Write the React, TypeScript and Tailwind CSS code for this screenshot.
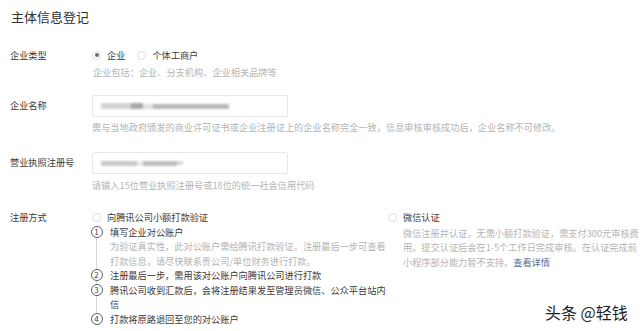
const dark = "text-[#3a3a3a]";
const gray = "text-[#b4b4b4]";

function Radio({ checked }: { checked?: boolean }) {
  return (
    <span className="w-[9px] h-[9px] rounded-full border border-[#dcdcdc] bg-white flex items-center justify-center shrink-0">
      {checked && <span className="w-[4px] h-[4px] rounded-full bg-[#6b6b6b]" />}
    </span>
  );
}

function StepNo({ n }: { n: number }) {
  return (
    <span className="w-[12px] h-[12px] rounded-full border border-[#5e5e5e] bg-white flex items-center justify-center text-[8px] leading-none text-[#444] shrink-0">
      {n}
    </span>
  );
}

function Step({ n, lines, desc }: { n: number; lines: string[]; desc?: string[] }) {
  return (
    <div className="flex items-start">
      <div className="h-[14.5px] flex items-center ml-[-1.5px]">
        <StepNo n={n} />
      </div>
      <div className="ml-[7.5px]">
        {lines.map((l) => (
          <div key={l} className={`${dark} whitespace-nowrap`}>
            {l}
          </div>
        ))}
        {desc?.map((l) => (
          <div key={l} className={`${gray} whitespace-nowrap`}>
            {l}
          </div>
        ))}
      </div>
    </div>
  );
}

export default function App() {
  return (
    <div className="w-[640px] h-[331px] bg-white overflow-hidden relative font-['Noto_Sans_CJK_SC','Noto_Sans',sans-serif] text-[9.2px] leading-[14px]">
      <div className="pl-[11px] pt-[9px] text-[13px] leading-[16px] text-[#2e2e2e]">主体信息登记</div>

      <div className="pl-[10px] mt-[23px] flex">
        <div className={`w-[82px] ${dark}`}>企业类型</div>
        <div>
          <div className="flex items-center h-[14px]">
            <Radio checked />
            <span className={`ml-[6px] ${dark}`}>企业</span>
            <span className="ml-[12px]">
              <Radio />
            </span>
            <span className={`ml-[6px] ${dark}`}>个体工商户</span>
          </div>
          <div className={`mt-[3px] ${gray} ml-[1px]`}>企业包括：企业、分支机构、企业相关品牌等</div>
        </div>
      </div>

      <div className="pl-[10px] mt-[16px] flex">
        <div className={`w-[82px] ${dark} leading-[20px]`}>企业名称</div>
        <div>
          <div className="w-[196px] h-[22px] border border-[#e8e8e8] rounded-[2px] flex items-center pl-[8px]">
            <div className="flex items-center blur-[1px]">
              <span className="w-[30px] h-[6px] bg-[#d4d4d4]" />
              <span className="w-[12px] h-[6px] bg-[#a9a9a9]" />
              <span className="w-[10px] h-[5px] bg-[#e2e2e2]" />
              <span className="w-[76px] h-[5px] bg-[#b8b8b8]" />
            </div>
          </div>
          <div className={`mt-[3px] ${gray} whitespace-nowrap`}>
            需与当地政府颁发的商业许可证书或企业注册证上的企业名称完全一致，信息审核审核成功后，企业名称不可修改。
          </div>
        </div>
      </div>

      <div className="pl-[10px] mt-[18px] flex">
        <div className={`w-[82px] ${dark} leading-[20px]`}>营业执照注册号</div>
        <div>
          <div className="w-[196px] h-[22px] border border-[#e8e8e8] rounded-[2px] flex items-center pl-[8px]">
            <div className="flex items-center blur-[1px]">
              <span className="w-[36px] h-[5px] bg-[#c9c9c9]" />
              <span className="w-[6px] h-[5px] bg-[#ececec]" />
              <span className="w-[34px] h-[5px] bg-[#bdbdbd]" />
              <span className="w-[6px] h-[4px] bg-[#dadada]" />
            </div>
          </div>
          <div className={`mt-[4px] ${gray} whitespace-nowrap`}>请输入15位营业执照注册号或18位的统一社会信用代码</div>
        </div>
      </div>

      <div className="pl-[10px] mt-[18px] flex leading-[14.5px]">
        <div className={`w-[82px] ${dark}`}>注册方式</div>
        <div className="w-[296px]">
          <div className="flex items-center h-[14.5px]">
            <Radio />
            <span className={`ml-[6px] ${dark}`}>向腾讯公司小额打款验证</span>
          </div>
          <div className="relative">
            <div className="absolute left-[4px] top-[9px] bottom-[9px] w-px bg-[#d8d8d8]" />
            <div className="relative">
              <Step
                n={1}
                lines={["填写企业对公账户"]}
                desc={[
                  "为验证真实性，此对公账户需给腾讯打款验证。注册最后一步可查看",
                  "打款信息，请尽快联系贵公司/单位财务进行打款。",
                ]}
              />
              <Step n={2} lines={["注册最后一步，需用该对公账户向腾讯公司进行打款"]} />
              <Step n={3} lines={["腾讯公司收到汇款后，会将注册结果发至管理员微信、公众平台站内", "信"]} />
              <Step n={4} lines={["打款将原路退回至您的对公账户"]} />
            </div>
          </div>
        </div>
        <div>
          <div className="flex items-center h-[14.5px]">
            <Radio />
            <span className={`ml-[6px] ${dark}`}>微信认证</span>
          </div>
          <div className={`ml-[15px] mt-[1px] ${gray} whitespace-nowrap`}>
            <div>微信注册并认证，无需小额打款验证，需支付300元审核费</div>
            <div>用。提交认证后会在1-5个工作日完成审核。在认证完成前</div>
            <div>
              小程序部分能力暂不支持。<span className="text-[#576b95]">查看详情</span>
            </div>
          </div>
        </div>
      </div>

      <div className="absolute left-[545px] top-[302px] text-[16px] leading-[20px] text-[#1e1e1e] whitespace-nowrap [text-shadow:0_0_2px_#fff,0_0_2px_#fff]">
        头条 @轻钱
      </div>
    </div>
  );
}
